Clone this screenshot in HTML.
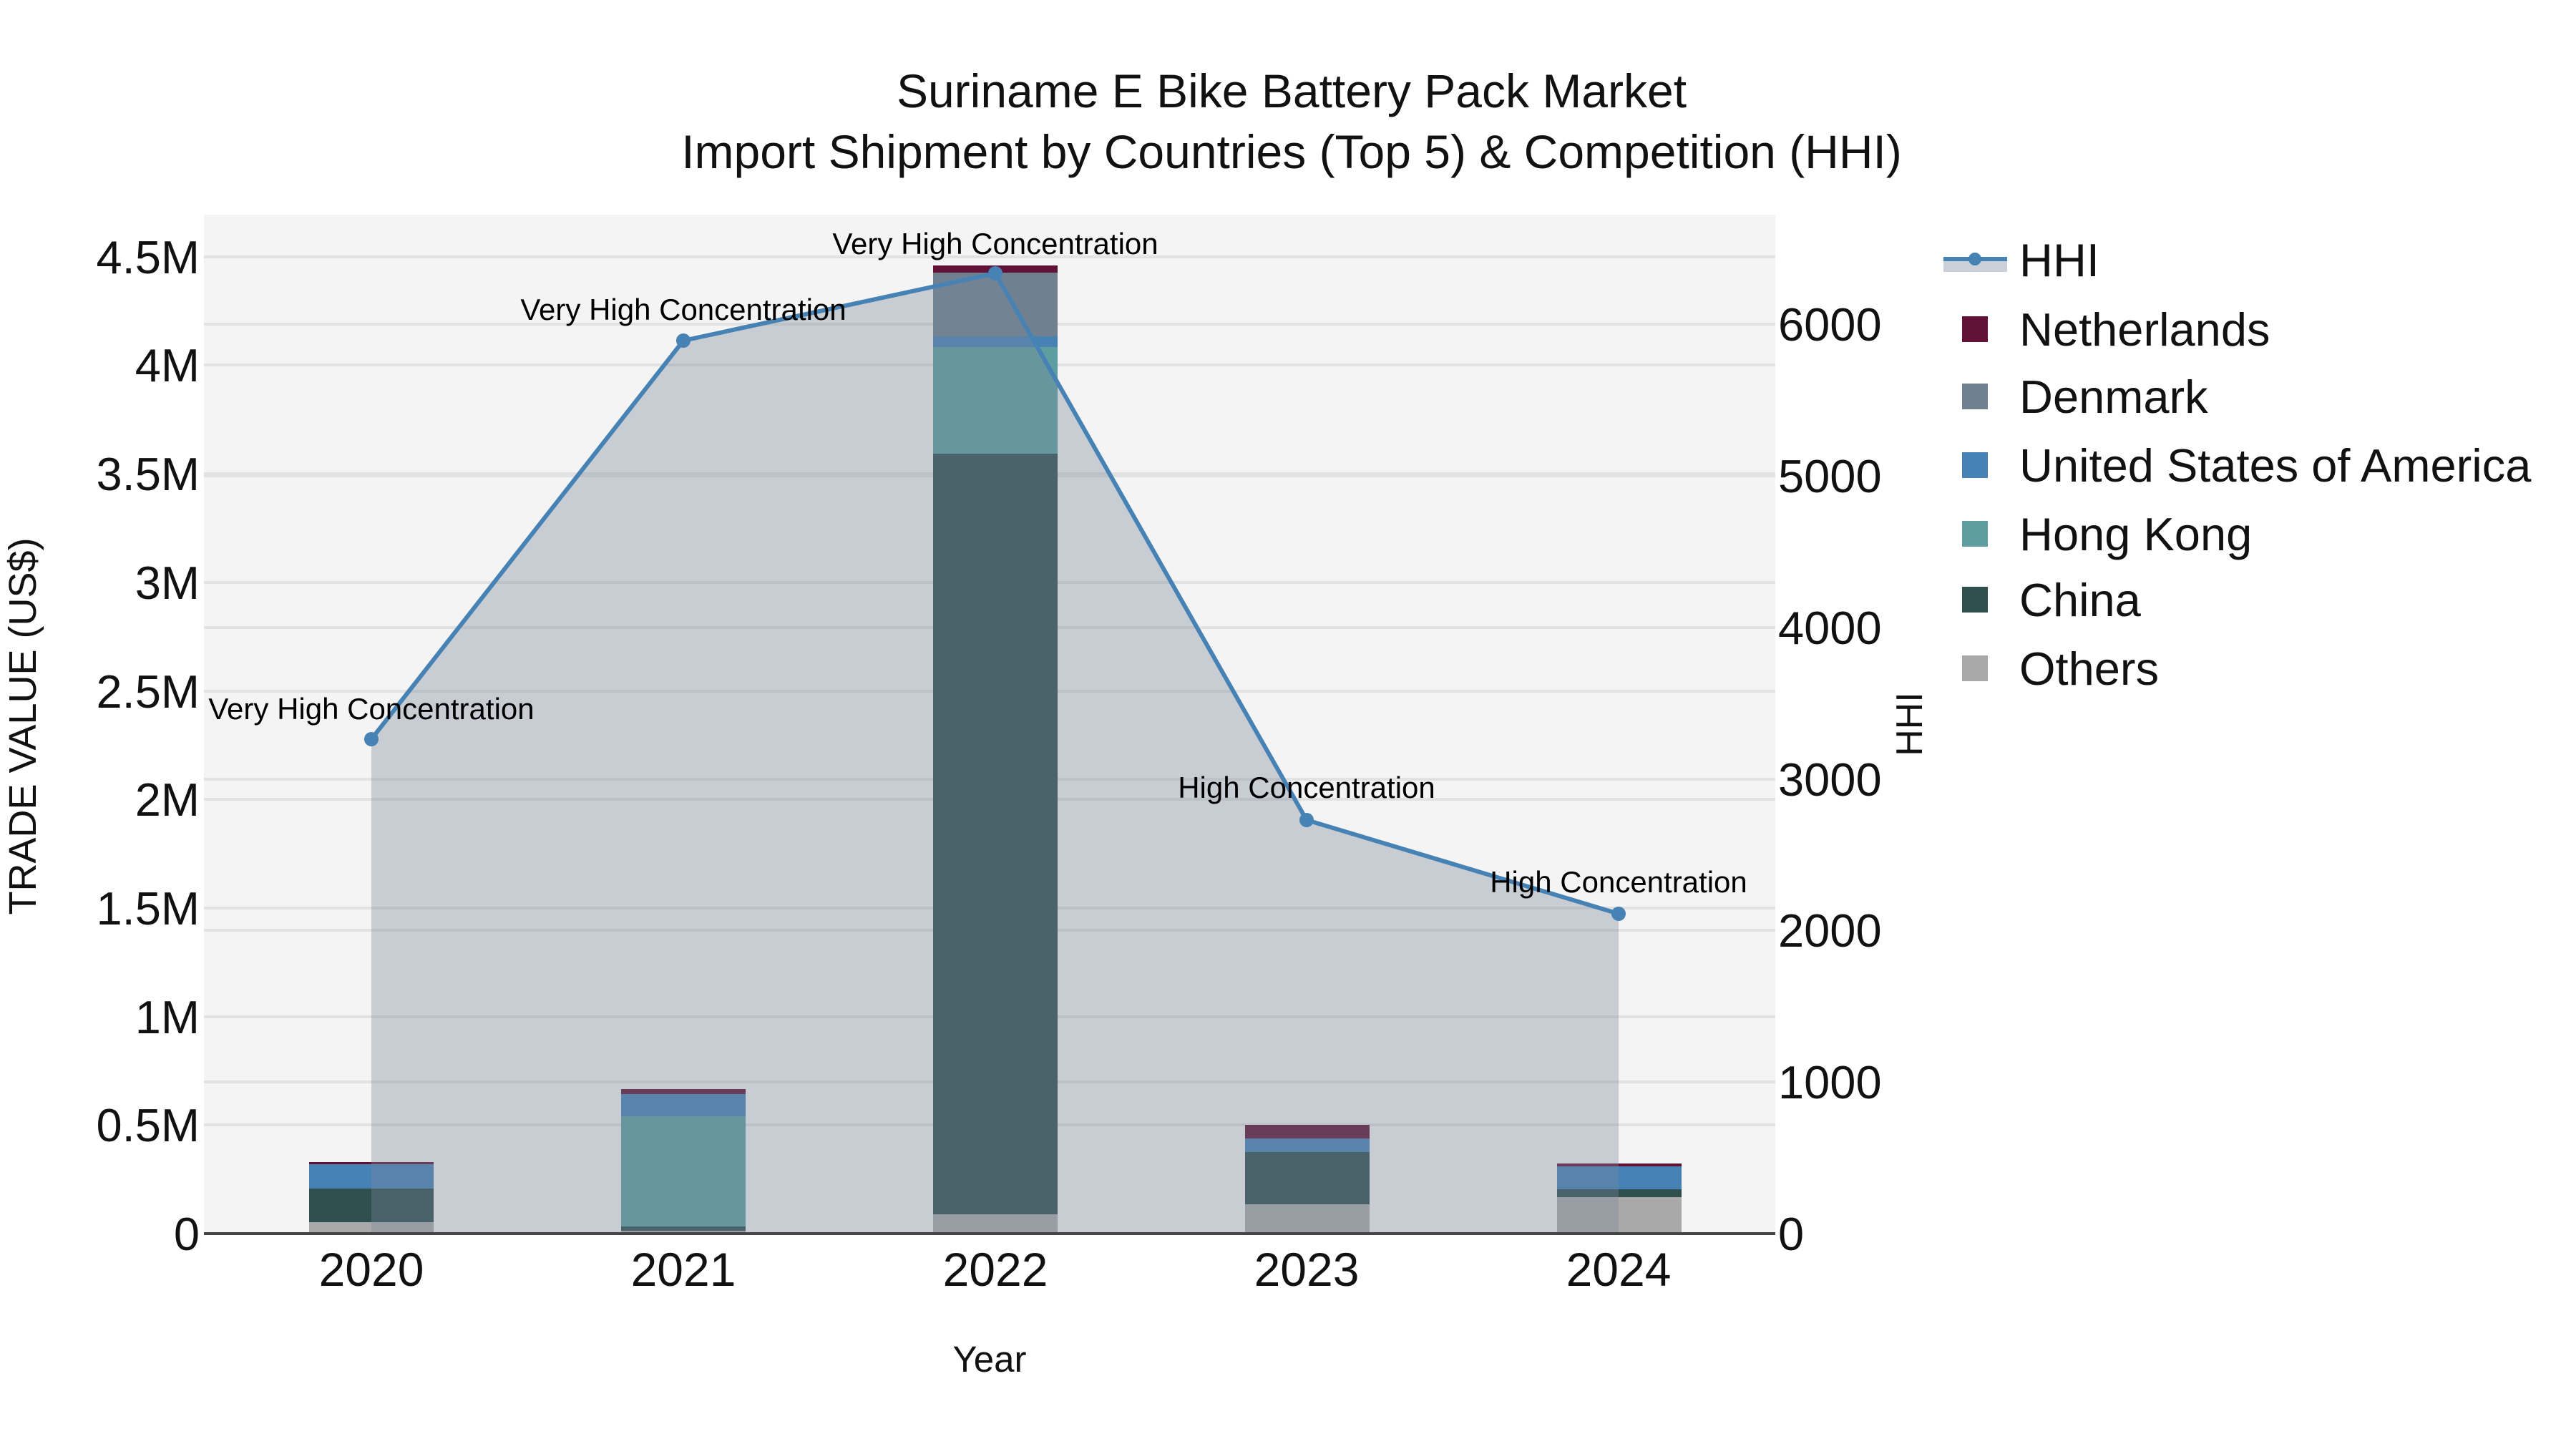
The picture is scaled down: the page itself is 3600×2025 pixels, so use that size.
<!DOCTYPE html>
<html><head><meta charset="utf-8"><style>
html,body{margin:0;padding:0;background:#fff;}
svg{display:block;font-family:"Liberation Sans",Arial,sans-serif;}
</style></head><body>
<svg width="3600" height="2025" viewBox="0 0 3600 2025" xmlns="http://www.w3.org/2000/svg">
<rect width="3600" height="2025" fill="#fff"/>
<rect x="285" y="300" width="2196" height="1424" fill="#f4f4f4"/>
<g stroke="#e2e2e2" stroke-width="4">
<line x1="285" x2="2481" y1="1572" y2="1572"/><line x1="285" x2="2481" y1="1421" y2="1421"/>
<line x1="285" x2="2481" y1="1269" y2="1269"/><line x1="285" x2="2481" y1="1117" y2="1117"/>
<line x1="285" x2="2481" y1="966" y2="966"/><line x1="285" x2="2481" y1="814" y2="814"/>
<line x1="285" x2="2481" y1="662" y2="662"/><line x1="285" x2="2481" y1="510" y2="510"/>
<line x1="285" x2="2481" y1="359" y2="359"/>
<line x1="285" x2="2481" y1="1512" y2="1512"/><line x1="285" x2="2481" y1="1300" y2="1300"/>
<line x1="285" x2="2481" y1="1089" y2="1089"/><line x1="285" x2="2481" y1="877" y2="877"/>
<line x1="285" x2="2481" y1="665" y2="665"/><line x1="285" x2="2481" y1="453" y2="453"/>
</g>
<g>
<rect x="432" y="1708" width="174" height="16" fill="#a9a9a9"/>
<rect x="432" y="1661" width="174" height="47" fill="#2f4f4f"/>
<rect x="432" y="1627" width="174" height="34" fill="#4682b4"/>
<rect x="432" y="1624" width="174" height="3" fill="#601336"/>
<rect x="868" y="1720" width="174" height="4" fill="#a9a9a9"/>
<rect x="868" y="1714" width="174" height="6" fill="#2f4f4f"/>
<rect x="868" y="1560" width="174" height="154" fill="#5f9ea0"/>
<rect x="868" y="1529" width="174" height="31" fill="#4682b4"/>
<rect x="868" y="1522" width="174" height="7" fill="#601336"/>
<rect x="1304" y="1697" width="174" height="27" fill="#a9a9a9"/>
<rect x="1304" y="634" width="174" height="1063" fill="#2f4f4f"/>
<rect x="1304" y="485" width="174" height="149" fill="#5f9ea0"/>
<rect x="1304" y="470" width="174" height="15" fill="#4682b4"/>
<rect x="1304" y="381" width="174" height="89" fill="#708090"/>
<rect x="1304" y="371" width="174" height="10" fill="#601336"/>
<rect x="1740" y="1683" width="174" height="41" fill="#a9a9a9"/>
<rect x="1740" y="1610" width="174" height="73" fill="#2f4f4f"/>
<rect x="1740" y="1591" width="174" height="19" fill="#4682b4"/>
<rect x="1740" y="1572" width="174" height="19" fill="#601336"/>
<rect x="2176" y="1673" width="174" height="51" fill="#a9a9a9"/>
<rect x="2176" y="1662" width="174" height="11" fill="#2f4f4f"/>
<rect x="2176" y="1630" width="174" height="32" fill="#4682b4"/>
<rect x="2176" y="1626" width="174" height="4" fill="#601336"/>
</g>
<polygon points="519,1724 519,1033 955,476 1391,382 1826,1146 2262,1277 2262,1724" fill="rgb(122,136,155)" fill-opacity="0.36"/>
<line x1="285" x2="2481" y1="1724" y2="1724" stroke="#444" stroke-width="4"/>
<polyline points="519,1033 955,476 1391,382 1826,1146 2262,1277" fill="none" stroke="#4682b4" stroke-width="6" stroke-linejoin="round"/>
<g fill="#4682b4">
<circle cx="519" cy="1033" r="10"/><circle cx="955" cy="476" r="10"/><circle cx="1391" cy="382" r="10"/>
<circle cx="1826" cy="1146" r="10"/><circle cx="2262" cy="1277" r="10"/>
</g>
<g font-size="42" fill="#000" text-anchor="middle">
<text x="519" y="1005">Very High Concentration</text>
<text x="955" y="447">Very High Concentration</text>
<text x="1391" y="355">Very High Concentration</text>
<text x="1826" y="1115">High Concentration</text>
<text x="2262" y="1247">High Concentration</text>
</g>
<g font-size="65" fill="#111" text-anchor="end">
<text x="279" y="1747">0</text><text x="279" y="1595">0.5M</text><text x="279" y="1444">1M</text>
<text x="279" y="1292">1.5M</text><text x="279" y="1140">2M</text><text x="279" y="989">2.5M</text>
<text x="279" y="837">3M</text><text x="279" y="685">3.5M</text><text x="279" y="533">4M</text>
<text x="279" y="382">4.5M</text>
</g>
<g font-size="65" fill="#111">
<text x="2485" y="1747">0</text><text x="2485" y="1535">1000</text><text x="2485" y="1323">2000</text>
<text x="2485" y="1112">3000</text><text x="2485" y="900">4000</text><text x="2485" y="688">5000</text>
<text x="2485" y="476">6000</text>
</g>
<g font-size="66" fill="#111" text-anchor="middle">
<text x="519" y="1797">2020</text><text x="955" y="1797">2021</text><text x="1391" y="1797">2022</text>
<text x="1826" y="1797">2023</text><text x="2262" y="1797">2024</text>
</g>
<text x="1383" y="1917" font-size="51" text-anchor="middle" fill="#111">Year</text>
<text transform="translate(50,1015) rotate(-90)" font-size="54" text-anchor="middle" fill="#111">TRADE VALUE (US$)</text>
<text transform="translate(2686,1012) rotate(-90)" font-size="52" text-anchor="middle" fill="#111">HHI</text>
<g font-size="66" fill="#111" text-anchor="middle">
<text x="1805" y="150">Suriname E Bike Battery Pack Market</text>
<text x="1805" y="235">Import Shipment by Countries (Top 5) &amp; Competition (HHI)</text>
</g>
<rect x="2716" y="362" width="89" height="18" fill="#cbd0d8"/>
<line x1="2716" x2="2805" y1="362" y2="362" stroke="#4682b4" stroke-width="6"/>
<circle cx="2760" cy="362" r="9" fill="#4682b4"/>
<rect x="2742" y="442" width="36" height="36" fill="#601336"/>
<rect x="2742" y="536" width="36" height="36" fill="#708090"/>
<rect x="2742" y="632" width="36" height="36" fill="#4682b4"/>
<rect x="2742" y="728" width="36" height="36" fill="#5f9ea0"/>
<rect x="2742" y="820" width="36" height="36" fill="#2f4f4f"/>
<rect x="2742" y="916" width="36" height="36" fill="#a9a9a9"/>
<g font-size="65" fill="#111">
<text x="2822" y="386">HHI</text>
<text x="2822" y="483">Netherlands</text>
<text x="2822" y="577">Denmark</text>
<text x="2822" y="673">United States of America</text>
<text x="2822" y="769">Hong Kong</text>
<text x="2822" y="861">China</text>
<text x="2822" y="957">Others</text>
</g>
</svg>
</body></html>
